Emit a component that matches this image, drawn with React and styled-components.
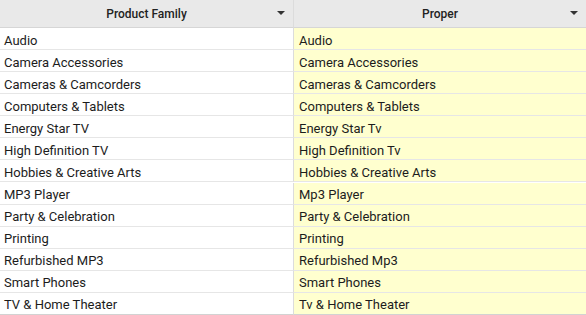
import styled, { createGlobalStyle } from "styled-components";

const rows = [
  ["Audio", "Audio"],
  ["Camera Accessories", "Camera Accessories"],
  ["Cameras & Camcorders", "Cameras & Camcorders"],
  ["Computers & Tablets", "Computers & Tablets"],
  ["Energy Star TV", "Energy Star Tv"],
  ["High Definition TV", "High Definition Tv"],
  ["Hobbies & Creative Arts", "Hobbies & Creative Arts"],
  ["MP3 Player", "Mp3 Player"],
  ["Party & Celebration", "Party & Celebration"],
  ["Printing", "Printing"],
  ["Refurbished MP3", "Refurbished Mp3"],
  ["Smart Phones", "Smart Phones"],
  ["TV & Home Theater", "Tv & Home Theater"],
];

const GlobalStyle = createGlobalStyle`
  body {
    margin: 0;
    background: #fff;
    font-family: Roboto, "Liberation Sans", sans-serif;
  }
`;

const Grid = styled.div`
  display: grid;
  grid-template-columns: 293px 293px;
  width: 586px;
  height: 315px;
  overflow: hidden;
  color: #1c1c1c;
`;

const HeadCell = styled.div`
  position: relative;
  height: 28px;
  box-sizing: border-box;
  display: flex;
  align-items: center;
  justify-content: center;
  background: #e9e9e9;
  border-bottom: 1px solid #d6d6d6;
  border-left: ${(p) => (p.$first ? "none" : "1px solid #dcdcdc")};
  font-size: 12px;
  font-weight: 500;
  color: #222;
`;

const Caret = styled.span`
  position: absolute;
  right: 8px;
  top: 11px;
  width: 0;
  height: 0;
  border-left: 4px solid transparent;
  border-right: 4px solid transparent;
  border-top: 4px solid #333;
`;

const Cell = styled.div`
  height: 22px;
  box-sizing: border-box;
  display: flex;
  align-items: center;
  padding-top: 3px;
  padding-left: ${(p) => (p.$first ? "4px" : "5px")};
  background: ${(p) => (p.$first ? "#fff" : "#ffffcf")};
  border-bottom: 1px solid ${(p) => (p.$last ? "#d2d2d2" : "#e6e6e6")};
  border-left: ${(p) => (p.$first ? "none" : "1px solid #dcdcdc")};
  font-size: 13px;
  white-space: nowrap;
`;

export default function App() {
  return (
    <>
      <GlobalStyle />
      <Grid>
        <HeadCell $first>
          Product Family
          <Caret />
        </HeadCell>
        <HeadCell>
          Proper
          <Caret />
        </HeadCell>
        {rows.map(([a, b], i) => {
          const last = i === rows.length - 1;
          return [
            <Cell $first $last={last} key={a}>{a}</Cell>,
            <Cell $last={last} key={a + "p"}>{b}</Cell>,
          ];
        })}
      </Grid>
    </>
  );
}
